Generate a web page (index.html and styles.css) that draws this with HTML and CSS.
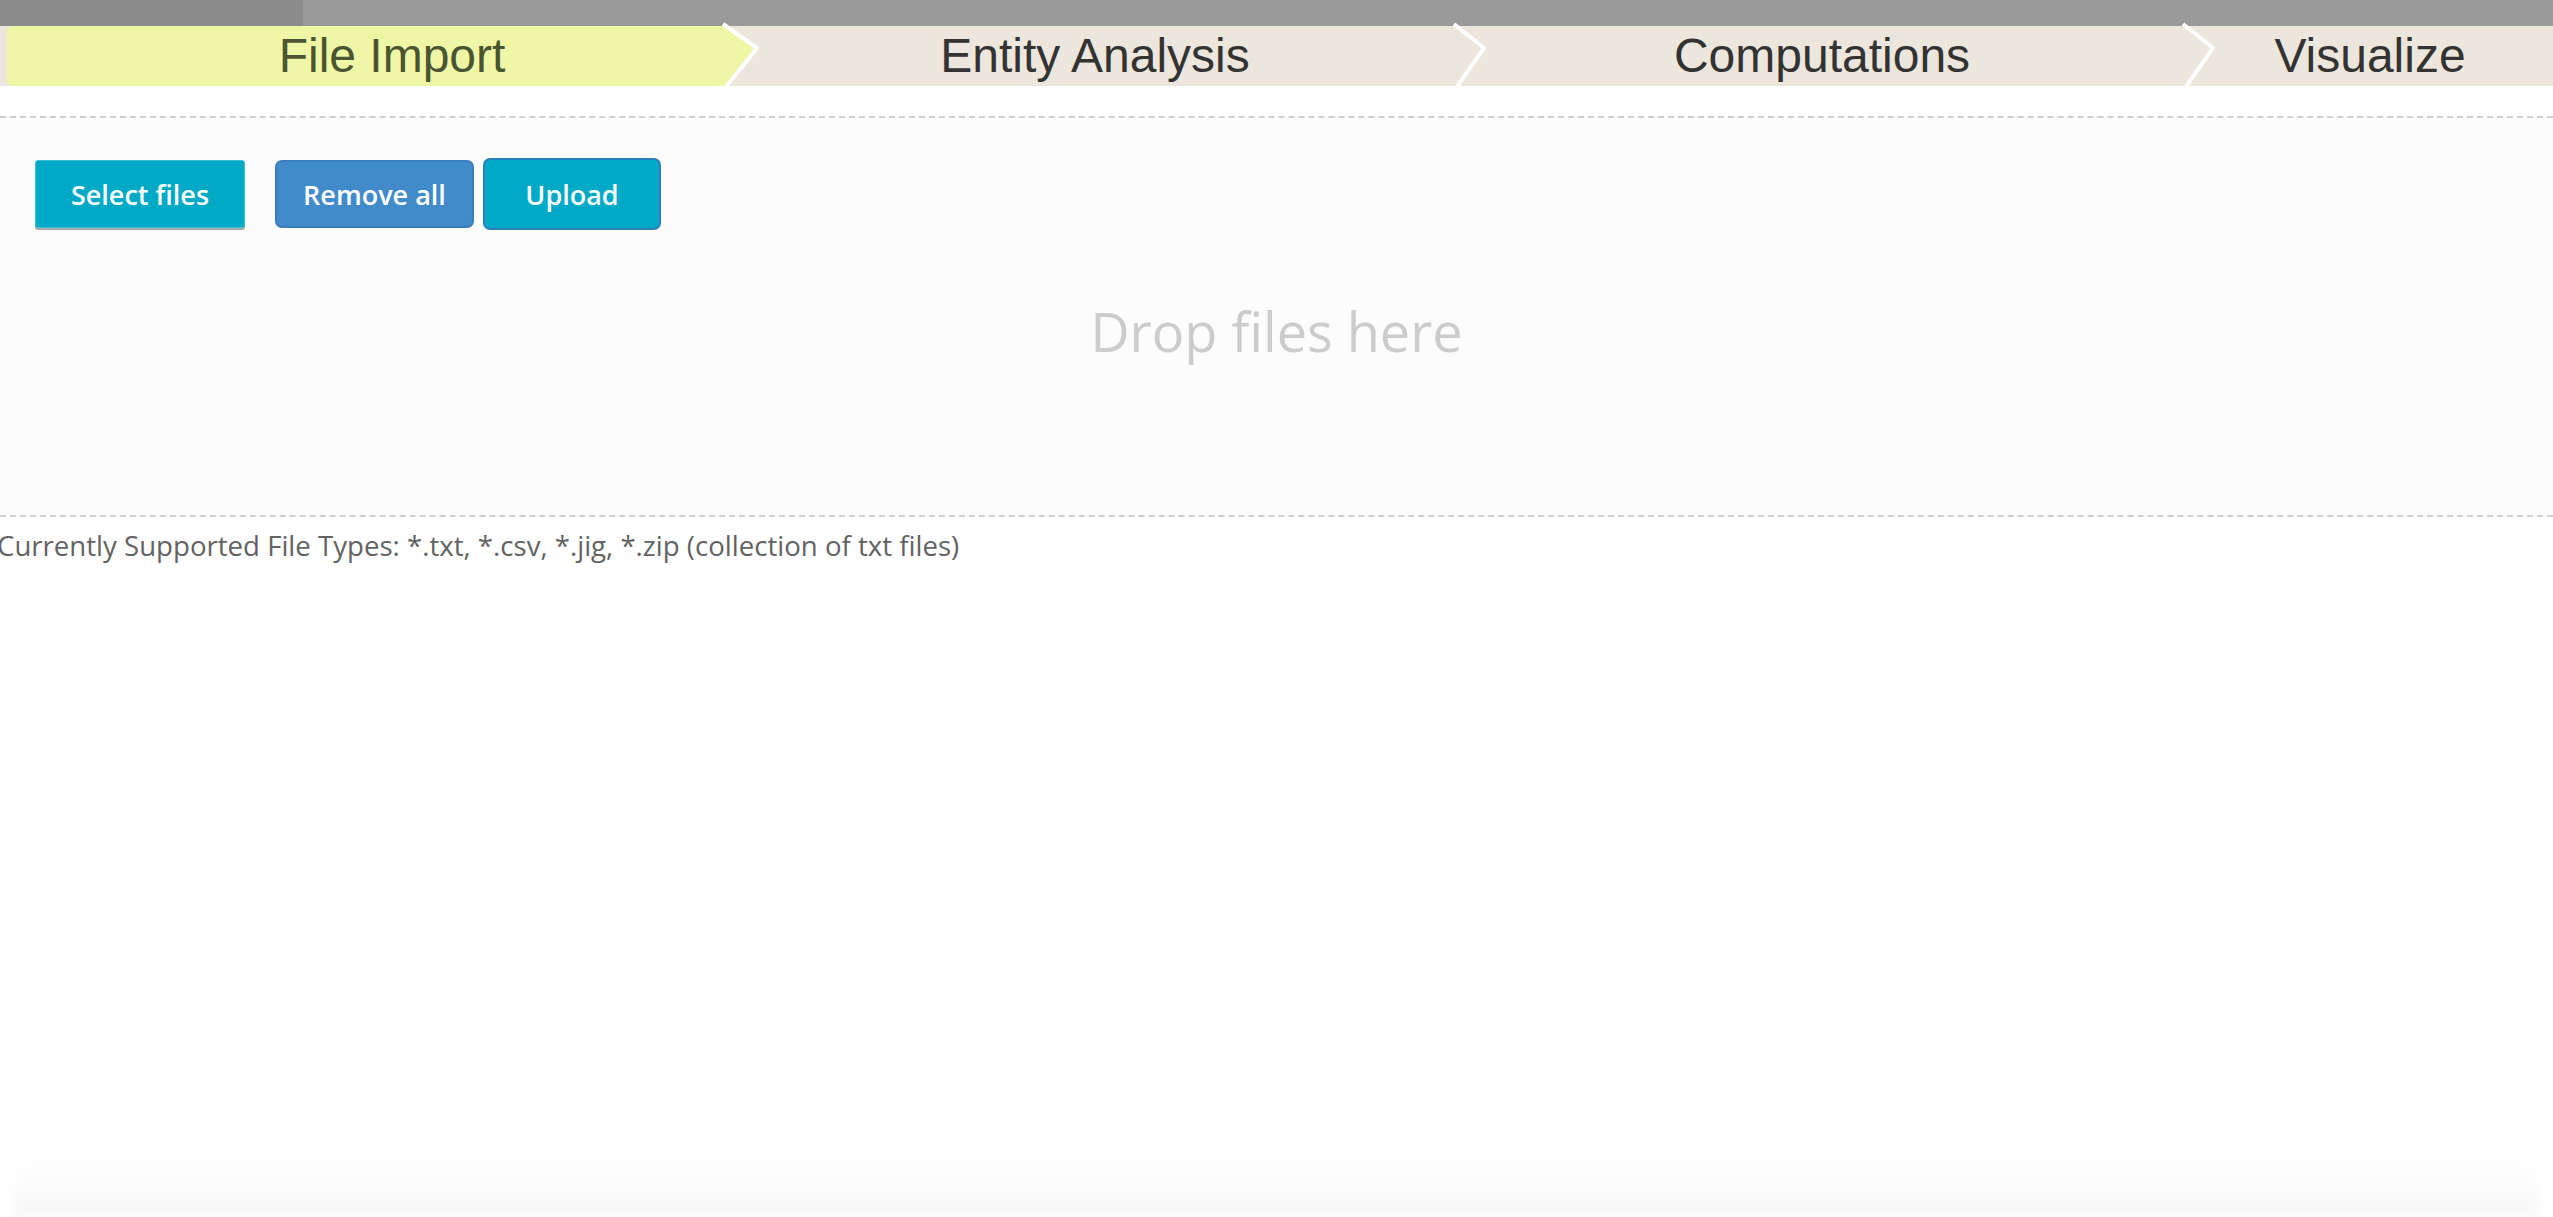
FILE: index.html
```html
<!DOCTYPE html>
<html lang="en">
<head>
<meta charset="utf-8">
<title>File Import</title>
<link rel="stylesheet" href="styles.css">
</head>
<body>
<div class="page">
  <div class="progress"><div class="progress-fill"></div></div>
  <nav class="steps">
    <div class="step step-active step-first">
      <span class="step-label">File Import</span>
      <svg class="chev" width="44" height="60" viewBox="0 0 44 60"><polygon points="0,0 7,0 41,22 9,60 0,60" fill="#eff7a6"/><polyline points="7,-2 41,22 9,62" fill="none" stroke="#fff" stroke-width="4" stroke-linejoin="round"/></svg>
    </div>
    <div class="step step-2">
      <span class="step-label">Entity Analysis</span>
      <svg class="chev" width="44" height="60" viewBox="0 0 44 60"><polyline points="7,-2 37,22 9,62" fill="none" stroke="#fff" stroke-width="4" stroke-linejoin="round"/></svg>
    </div>
    <div class="step step-3">
      <span class="step-label">Computations</span>
      <svg class="chev" width="44" height="60" viewBox="0 0 44 60"><polyline points="7,-2 37,22 9,62" fill="none" stroke="#fff" stroke-width="4" stroke-linejoin="round"/></svg>
    </div>
    <div class="step step-4">
      <span class="step-label">Visualize</span>
    </div>
  </nav>

  <section class="dropzone">
    <div class="actions">
      <button class="btn btn-select">Select files</button>
      <button class="btn btn-remove">Remove all</button>
      <button class="btn btn-upload">Upload</button>
    </div>
    <div class="drop-hint">Drop files here</div>
  </section>

  <p class="supported">Currently Supported File Types: *.txt, *.csv, *.jig, *.zip (collection of txt files)</p>

  <div class="bottom-shade"></div>
</div>
</body>
</html>
```

FILE: styles.css
```css
* { box-sizing: border-box; }

html, body {
  margin: 0;
  padding: 0;
  background: #ffffff;
}

body {
  font-family: "Open Sans", "Liberation Sans", Arial, sans-serif;
  overflow: hidden;
}

.page {
  min-height: 100vh;
  display: flex;
  flex-direction: column;
}

.progress {
  height: 26px;
  background: #9a9a9a;
  display: flex;
}

.progress-fill {
  width: 303px;
  background: #8c8c8c;
}

.steps {
  height: 60px;
  background: #ede6dc;
  display: flex;
  font-family: "Liberation Sans", Arial, sans-serif;
  font-size: 48px;
  color: #333333;
}

.step {
  position: relative;
  display: flex;
  align-items: center;
  justify-content: center;
  line-height: 60px;
  white-space: nowrap;
}

.step-first {
  margin-left: 7px;
  width: 716px;
  padding-left: 54px;
  background: #eff7a6;
  border-radius: 7px 0 0 7px;
  color: #4a5532;
}

.step-2 { width: 731px; padding-left: 13px; }
.step-3 { width: 729px; padding-left: 7px; }
.step-4 { flex: 1; padding-left: 4px; }

.chev {
  position: absolute;
  top: 0;
  right: -44px;
  margin-right: 7px;
  z-index: 2;
  overflow: visible;
}

.dropzone {
  margin-top: 30px;
  height: 401px;
  background: #fcfcfc;
  border-top: 2px dashed #cfcfcf;
  border-bottom: 2px dashed #cfcfcf;
  padding: 40px 0 0 35px;
}

.actions {
  display: flex;
  align-items: center;
}

.btn {
  font-family: "Open Sans", "Liberation Sans", sans-serif;
  font-weight: 600;
  font-size: 27px;
  color: #ffffff;
  display: flex;
  align-items: center;
  justify-content: center;
  padding: 0;
  cursor: pointer;
}

.btn-select {
  width: 210px;
  height: 68px;
  background: #00a9c6;
  border: 1px solid #3dbdd3;
  border-radius: 3px;
  box-shadow: 0 2px 0 #a9a9a9;
  margin-right: 30px;
}

.btn-remove {
  width: 199px;
  height: 68px;
  background: #428bca;
  border: 2px solid #3a7dbf;
  border-radius: 7px;
  margin-right: 9px;
}

.btn-upload {
  width: 178px;
  height: 72px;
  background: #00aac7;
  border: 2px solid #2d80bf;
  border-radius: 7px;
}

.drop-hint {
  margin-top: 64px;
  margin-left: -35px;
  text-align: center;
  font-size: 54px;
  color: #cccccc;
}

.supported {
  margin: 9px 0 0 -3px;
  font-size: 27.6px;
  color: #636363;
}

.bottom-shade {
  margin: auto 14px 0 14px;
  height: 62px;
  border-radius: 40px 40px 0 0;
  background: linear-gradient(#ffffff, #f7f7f7);
  filter: blur(6px);
}
```
